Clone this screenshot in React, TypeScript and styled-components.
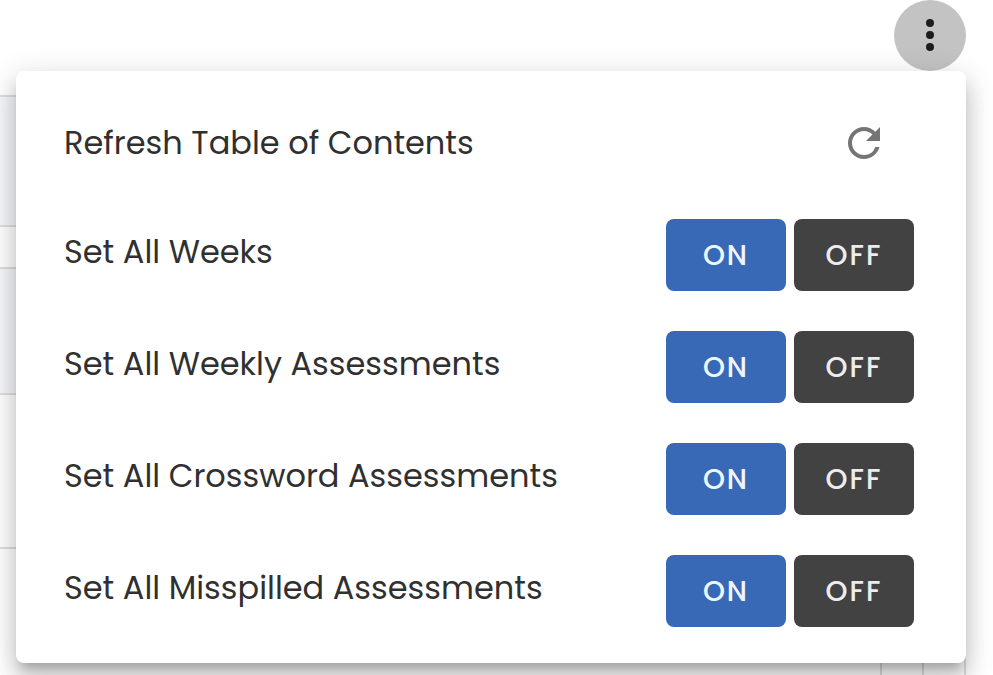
import React from "react";
import styled, { createGlobalStyle } from "styled-components";

const GlobalStyle = createGlobalStyle`
  *, *::before, *::after { box-sizing: border-box; }
  body {
    margin: 0;
    background: #fff;
    color: #303030;
    font-family: Poppins, Inter, sans-serif;
  }
`;

const Page = styled.main`
  position: relative;
  height: 100vh;
  overflow: hidden;
`;

const Toolbar = styled.header`
  display: flex;
  justify-content: flex-end;
  height: 95px;
  padding-right: 27px;
`;

const MoreButton = styled.button`
  display: flex;
  align-items: center;
  justify-content: center;
  width: 72px;
  height: 71px;
  padding: 0 0 1px;
  border: 0;
  border-radius: 50%;
  background: #c3c3c3;
  color: #1c1c1c;
  cursor: pointer;
`;

const Icon = styled.svg`
  display: block;
  width: 48px;
  height: 48px;
  fill: currentColor;
`;

const Outline = styled.div`
  margin-right: 27px;
  border-right: 2px solid #dedede;
`;

const Band = styled.div<{ $height: number; $tinted?: boolean }>`
  height: ${(p) => p.$height}px;
  border-top: 2px solid #dedede;
  background: ${(p) => (p.$tinted ? "#f5f7fa" : "#fff")};
`;

const OpenBand = styled(Band)`
  display: flex;
  justify-content: flex-end;
  gap: 40px;
  padding-right: 40px;
`;

const Divider = styled.span`
  width: 2px;
  background: #dedede;
`;

const Menu = styled.section`
  position: absolute;
  top: 71px;
  left: 16px;
  right: 27px;
  padding: 16px 0;
  border-radius: 8px;
  background: #fff;
  box-shadow:
    0 10px 10px -6px rgba(0, 0, 0, 0.2),
    0 16px 20px 2px rgba(0, 0, 0, 0.14),
    0 6px 28px 4px rgba(0, 0, 0, 0.12);
`;

const Row = styled.div`
  display: flex;
  align-items: flex-start;
  justify-content: space-between;
  padding: 20px 52px 20px 48px;
`;

const RefreshRow = styled(Row)`
  align-items: center;
`;

const Label = styled.span`
  font-size: 32px;
  line-height: 66px;
  white-space: nowrap;
`;

const RefreshButton = styled.button`
  display: flex;
  align-items: center;
  justify-content: center;
  width: 100px;
  height: 72px;
  padding: 0;
  border: 0;
  background: transparent;
  color: #757575;
  cursor: pointer;
`;

const Actions = styled.div`
  display: flex;
  gap: 8px;
`;

const ActionButton = styled.button<{ $on?: boolean }>`
  width: 120px;
  height: 72px;
  padding: 2px 0 0;
  border: 0;
  border-radius: 8px;
  background: ${(p) => (p.$on ? "#3869b7" : "#424242")};
  color: ${(p) => (p.$on ? "#eef6ff" : "#ececec")};
  font-family: inherit;
  font-size: 28px;
  font-weight: 500;
  letter-spacing: 2px;
  line-height: 40px;
  cursor: pointer;
`;

const settings = [
  "Set All Weeks",
  "Set All Weekly Assessments",
  "Set All Crossword Assessments",
  "Set All Misspilled Assessments",
];

function ToggleRow({ label }: { label: string }) {
  return (
    <Row role="group" aria-label={label}>
      <Label>{label}</Label>
      <Actions>
        <ActionButton type="button" $on>ON</ActionButton>
        <ActionButton type="button">OFF</ActionButton>
      </Actions>
    </Row>
  );
}

export default function App() {
  return (
    <>
      <GlobalStyle />
      <Page>
        <Toolbar>
          <MoreButton type="button" aria-label="More options" aria-expanded="true">
            <Icon viewBox="0 0 24 24" aria-hidden="true">
              <path d="M12 16a2 2 0 0 1 2 2 2 2 0 0 1-2 2 2 2 0 0 1-2-2 2 2 0 0 1 2-2m0-6a2 2 0 0 1 2 2 2 2 0 0 1-2 2 2 2 0 0 1-2-2 2 2 0 0 1 2-2m0-6a2 2 0 0 1 2 2 2 2 0 0 1-2 2 2 2 0 0 1-2-2 2 2 0 0 1 2-2Z" />
            </Icon>
          </MoreButton>
        </Toolbar>
        <Outline>
          <Band $height={130} $tinted />
          <Band $height={42} />
          <Band $height={126} $tinted />
          <Band $height={154} />
          <OpenBand $height={240}>
            <Divider />
            <Divider />
          </OpenBand>
        </Outline>
        <Menu aria-label="Table of contents options">
          <RefreshRow>
            <Label>Refresh Table of Contents</Label>
            <RefreshButton type="button" aria-label="Refresh table of contents">
              <Icon viewBox="0 0 24 24" aria-hidden="true">
                <path d="M17.65 6.35A7.96 7.96 0 0 0 12 4a8 8 0 0 0-8 8 8 8 0 0 0 8 8c3.73 0 6.84-2.55 7.73-6h-2.08A5.99 5.99 0 0 1 12 18a6 6 0 0 1-6-6 6 6 0 0 1 6-6c1.66 0 3.14.69 4.22 1.78L13 11h7V4l-2.35 2.35Z" />
              </Icon>
            </RefreshButton>
          </RefreshRow>
          {settings.map((label) => (
            <ToggleRow key={label} label={label} />
          ))}
        </Menu>
      </Page>
    </>
  );
}
